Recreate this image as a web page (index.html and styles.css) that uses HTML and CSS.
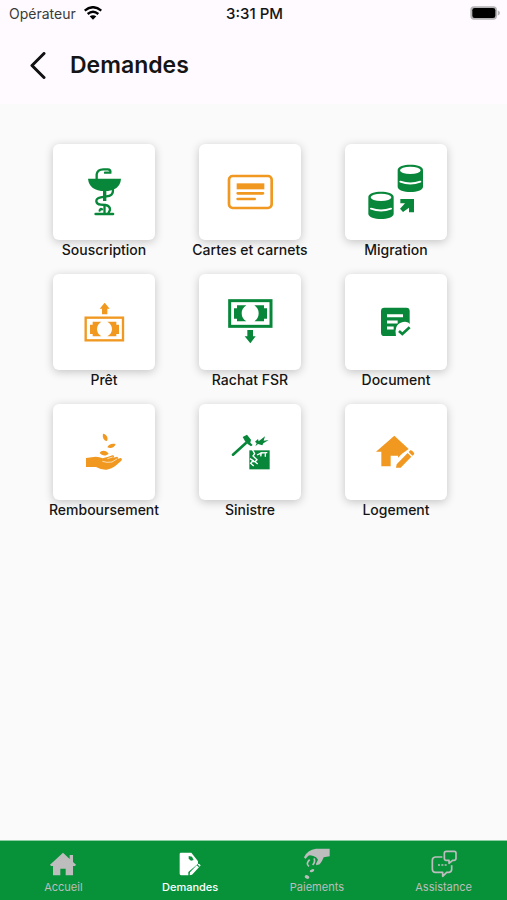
FILE: index.html
```html
<!DOCTYPE html>
<html lang="fr">
<head>
<meta charset="utf-8">
<meta name="viewport" content="width=device-width, initial-scale=1">
<title>Demandes</title>
<link rel="stylesheet" href="styles.css">
</head>
<body>
<header class="top">
  <div class="status">
    <div class="carrier"><span>Opérateur</span>
      <svg class="wifi" viewBox="0 0 54 42" aria-hidden="true"><g fill="none" stroke="#000" stroke-width="7"><path d="M2 14Q27-7 52 14"/><path d="M11 24Q27 10 43 24"/></g><path d="M17 31Q27 24 37 31L27 41Z"/></svg>
    </div>
    <time class="clock">3:31 PM</time>
    <svg class="battery" viewBox="0 0 90 42" aria-hidden="true"><rect x="1" y="1" width="80" height="40" rx="11" fill="#b5b3b5"/><path d="M83 13Q90 16 90 21T83 29Z" fill="#b5b3b5"/><rect x="7" y="6" width="69" height="30" rx="7"/></svg>
  </div>
  <div class="titlebar">
    <button class="back" type="button" aria-label="Retour"><svg viewBox="0 0 48 80" aria-hidden="true"><path d="M42 4 6 40 42 76" fill="none" stroke="#111" stroke-width="9" stroke-linecap="round" stroke-linejoin="round"/></svg></button>
    <h1>Demandes</h1>
  </div>
</header>

<main class="grid">
  <a class="item" href="#souscription"><span class="card green">
    <svg viewBox="39 42 306 288" aria-hidden="true"><path d="M144 146H243Q240 183 194 183 148 183 144 146Z"/><path d="M189 180H199V213H189ZM190 222H197V252H190Z"/><g fill="none" stroke="currentColor" stroke-width="7" stroke-linecap="round"><path d="M170 146V133Q172 118 190 118H203Q213 118 211 128H195"/><path d="M219 180Q220 198 199 199L182 202Q168 205 169 214T182 224L196 225Q211 228 210 240L205 250"/><path d="M167 252H219" stroke-width="8"/><path d="M186 238Q180 235 179 242"/></g></svg>
  </span><span class="label">Souscription</span></a>

  <a class="item" href="#cartes"><span class="card orange">
    <svg viewBox="42 42 306 288" aria-hidden="true"><rect x="132" y="138" width="128" height="96" rx="11" fill="none" stroke="currentColor" stroke-width="8"/><path d="M155 160H238V178H155Z"/><path d="M158 190H234M158 207H209" stroke="currentColor" stroke-width="8" stroke-linecap="round"/></svg>
  </span><span class="label">Cartes et carnets</span></a>

  <a class="item" href="#migration"><span class="card green">
    <svg viewBox="45 42 306 288" aria-hidden="true">
      <g id="db"><path d="M203 120C203 99 279 99 279 120V170C279 191 203 191 203 170Z"/><ellipse cx="241" cy="121" rx="31" ry="11" fill="#fff"/><path d="M211 155Q241 166 271 155" fill="none" stroke="#fff" stroke-width="6" stroke-linecap="round"/></g>
      <use href="#db" x="-88" y="81"/>
      <path d="M211 207H252V247H237V233L219 246 210 236 225 220H211Z"/></svg>
  </span><span class="label">Migration</span></a>

  <a class="item" href="#pret"><span class="card orange">
    <svg viewBox="39 27 306 288" aria-hidden="true"><rect x="137" y="158" width="112" height="68" fill="none" stroke="currentColor" stroke-width="7"/><path d="M158 170H184Q171 178 171 192T184 214H158V207H150V179H158ZM202 170H229V179H237V207H229V214H202Q216 206 216 192T202 170Z"/><path d="M194 113 209 131H202V148H186V131H179Z"/></svg>
  </span><span class="label">Prêt</span></a>

  <a class="item" href="#rachat"><span class="card green">
    <svg viewBox="42 27 306 288" aria-hidden="true"><rect x="134" y="107" width="124" height="77" fill="none" stroke="currentColor" stroke-width="9"/><path d="M156 121H184Q170 130 170 145T184 169H156V161H147V130H156ZM208 121H237V130H246V161H237V169H208Q221 160 221 145T208 121Z"/><path d="M187 195H204V214H212L196 235 179 214H187Z"/></svg>
  </span><span class="label">Rachat FSR</span></a>

  <a class="item" href="#document"><span class="card green">
    <svg viewBox="45 27 306 288" aria-hidden="true"><rect x="153" y="128" width="86" height="85" rx="10"/><path d="M171 152H219M171 171H203M171 189H191" stroke="#fff" stroke-width="9"/><path d="M198 214Q194 198 199 186 204 174 219 171 234 168 242 179V214Z" fill="#fff"/><path d="M207 198 217 207 239 187" fill="none" stroke="currentColor" stroke-width="8"/></svg>
  </span><span class="label">Document</span></a>

  <a class="item" href="#remboursement"><span class="card orange">
    <svg viewBox="39 27 306 288" aria-hidden="true"><path d="M189 116C200 118 206 128 201 138 190 136 187 126 189 116ZM202 157C206 147 216 144 227 147 223 158 213 161 202 157ZM179 174C184 164 199 165 206 176 198 184 186 183 179 174Z"/><path d="M138 189 161 186Q174 184 188 190L205 185 217 181Q226 181 220 188L231 185Q236 187 234 191L242 189Q248 191 244 197L225 214Q216 221 200 224 184 225 168 216H138Z"/><path d="M187 199Q200 204 216 201L232 191M202 191 218 186" fill="none" stroke="#fff" stroke-width="2"/></svg>
  </span><span class="label">Remboursement</span></a>

  <a class="item" href="#sinistre"><span class="card green">
    <svg viewBox="42 27 306 288" aria-hidden="true"><path d="M144 179 182 145" stroke="currentColor" stroke-width="8" stroke-linecap="round"/><path d="M173 126 186 119 198 134 196 143 203 150 198 154 189 148 182 142Z"/><path d="M210 140 219 132 221 139 240 124 236 137 251 135 235 145 232 151 219 147 211 154 215 145Z"/><path d="M193 166H254V223H193Z"/><path d="M202 163 209 176 204 183 216 194 210 200 218 207M195 191 205 197 197 205 206 213M216 180 229 174 227 184M226 174 247 173M241 174V185M210 200 199 199" fill="none" stroke="#fff" stroke-width="4"/></svg>
  </span><span class="label">Sinistre</span></a>

  <a class="item" href="#logement"><span class="card orange">
    <svg viewBox="45 27 306 288" aria-hidden="true"><path d="M193 122 236 162 216 176 204 188V182H182V214H154V170H138Z"/><path d="M200 208 233 174 244 185 212 218H198ZM236 171 241 166Q244 165 247 168L252 173Q254 176 251 179L247 182Z"/></svg>
  </span><span class="label">Logement</span></a>
</main>

<nav class="tabs">
  <a class="tab" href="#accueil"><svg viewBox="0 0 90 96" aria-hidden="true"><path d="M45 17 6 53 9 57H15V85H37V65H53V85H75V57H81L84 53 75 45V24H65V36Z"/></svg><span>Accueil</span></a>
  <a class="tab active" href="#demandes" aria-current="page"><svg viewBox="0 0 90 96" aria-hidden="true"><path d="M18 17H49L69 43V50L40 75V85H18Q14 84 14 80V21Q14 17 18 17Z"/><path d="M41 27 51 29 56 39 48 41 41 35Z" fill="#07923a"/><path d="M45 76 65 55 72 61 51 83 44 85ZM68 52 72 50 77 55 74 59Z"/></svg><span>Demandes</span></a>
  <a class="tab" href="#paiements"><svg viewBox="0 0 90 96" aria-hidden="true"><path d="M6 31Q16 8 42 5H83V28L65 31Q61 43 53 52L43 55 42 50 48 38 42 31 34 27 24 25 19 26 10 36Z"/><path d="M23 38Q10 50 21 58M36 34Q41 44 32 54" fill="none" stroke="currentColor" stroke-width="5"/><ellipse cx="30" cy="71" rx="7" ry="4" transform="rotate(-20 30 71)"/><ellipse cx="15" cy="90" rx="7" ry="5" transform="rotate(28 15 90)"/></svg><span>Paiements</span></a>
  <a class="tab" href="#assistance"><svg viewBox="0 0 90 96" aria-hidden="true"><g fill="none" stroke="currentColor" stroke-width="5" stroke-linejoin="round"><path d="M40 30H19Q10 31 10 40V66Q10 76 19 76H41V88L53 76H60Q68 75 68 67V55"/><path d="M46 34V19Q46 13 52 13H76Q81 13 81 19V34Q81 40 75 40H71L60 49V40H51Q46 40 46 34Z"/></g><path d="M27 54H33M37 54H43M47 54H53" stroke="currentColor" stroke-width="4"/></svg><span>Assistance</span></a>
</nav>
</body>
</html>
```
FILE: styles.css
```css
* {
  box-sizing: border-box;
}

body {
  margin: 0;
  min-height: 100vh;
  display: flex;
  flex-direction: column;
  background: #fafafa;
  color: #151515;
  font-family: Inter, "Liberation Sans", sans-serif;
}

a {
  color: inherit;
  text-decoration: none;
}

svg {
  display: block;
  fill: currentColor;
}

.top {
  background: #fefaff;
  padding-bottom: 16px;
}

.status {
  display: grid;
  grid-template-columns: 1fr auto 1fr;
  align-items: center;
  height: 26px;
  padding: 0 7px 0 9px;
  font-size: 14px;
}

.carrier {
  display: flex;
  align-items: center;
  gap: 8px;
  color: #3a3a3a;
}

.wifi {
  width: 18px;
  height: 14px;
  color: #000;
}

.clock {
  font-size: 15px;
  font-weight: 500;
}

.battery {
  width: 30px;
  height: 14px;
  justify-self: end;
  color: #000;
}

.titlebar {
  display: flex;
  align-items: center;
  gap: 24px;
  height: 62px;
  padding: 16px 30px 0;
}

.back {
  padding: 0;
  border: 0;
  background: none;
}

.back svg {
  width: 16px;
  height: 27px;
}

h1 {
  margin: 0;
  font-size: 23px;
  line-height: 32px;
  font-weight: 600;
}

.grid {
  flex: 1;
  display: grid;
  grid-template-columns: repeat(3, 1fr);
  grid-auto-rows: 114px;
  row-gap: 16px;
  padding: 40px 38px 40px 31px;
}

.item {
  display: flex;
  flex-direction: column;
  align-items: center;
}

.card {
  width: 102px;
  height: 96px;
  border-radius: 6px;
  background: #fff;
  box-shadow: 0 2px 10px rgba(0, 0, 0, 0.22);
}

.card svg {
  width: 100%;
  height: 100%;
}

.green {
  color: #08873a;
}

.orange {
  color: #f0981f;
}

.label {
  font-size: 14px;
  line-height: 20px;
  font-weight: 500;
  white-space: nowrap;
}

.tabs {
  display: grid;
  grid-template-columns: repeat(4, 1fr);
  height: 60px;
  border-top: 1px solid #8ccfa3;
  background: #07923a;
  color: #bdbdbd;
}

.tab {
  display: flex;
  flex-direction: column;
  align-items: center;
  padding-top: 6px;
  font-size: 11px;
  line-height: 16px;
}

.tab svg {
  width: 30px;
  height: 32px;
}

.active {
  color: #fff;
  font-weight: 500;
}
```
